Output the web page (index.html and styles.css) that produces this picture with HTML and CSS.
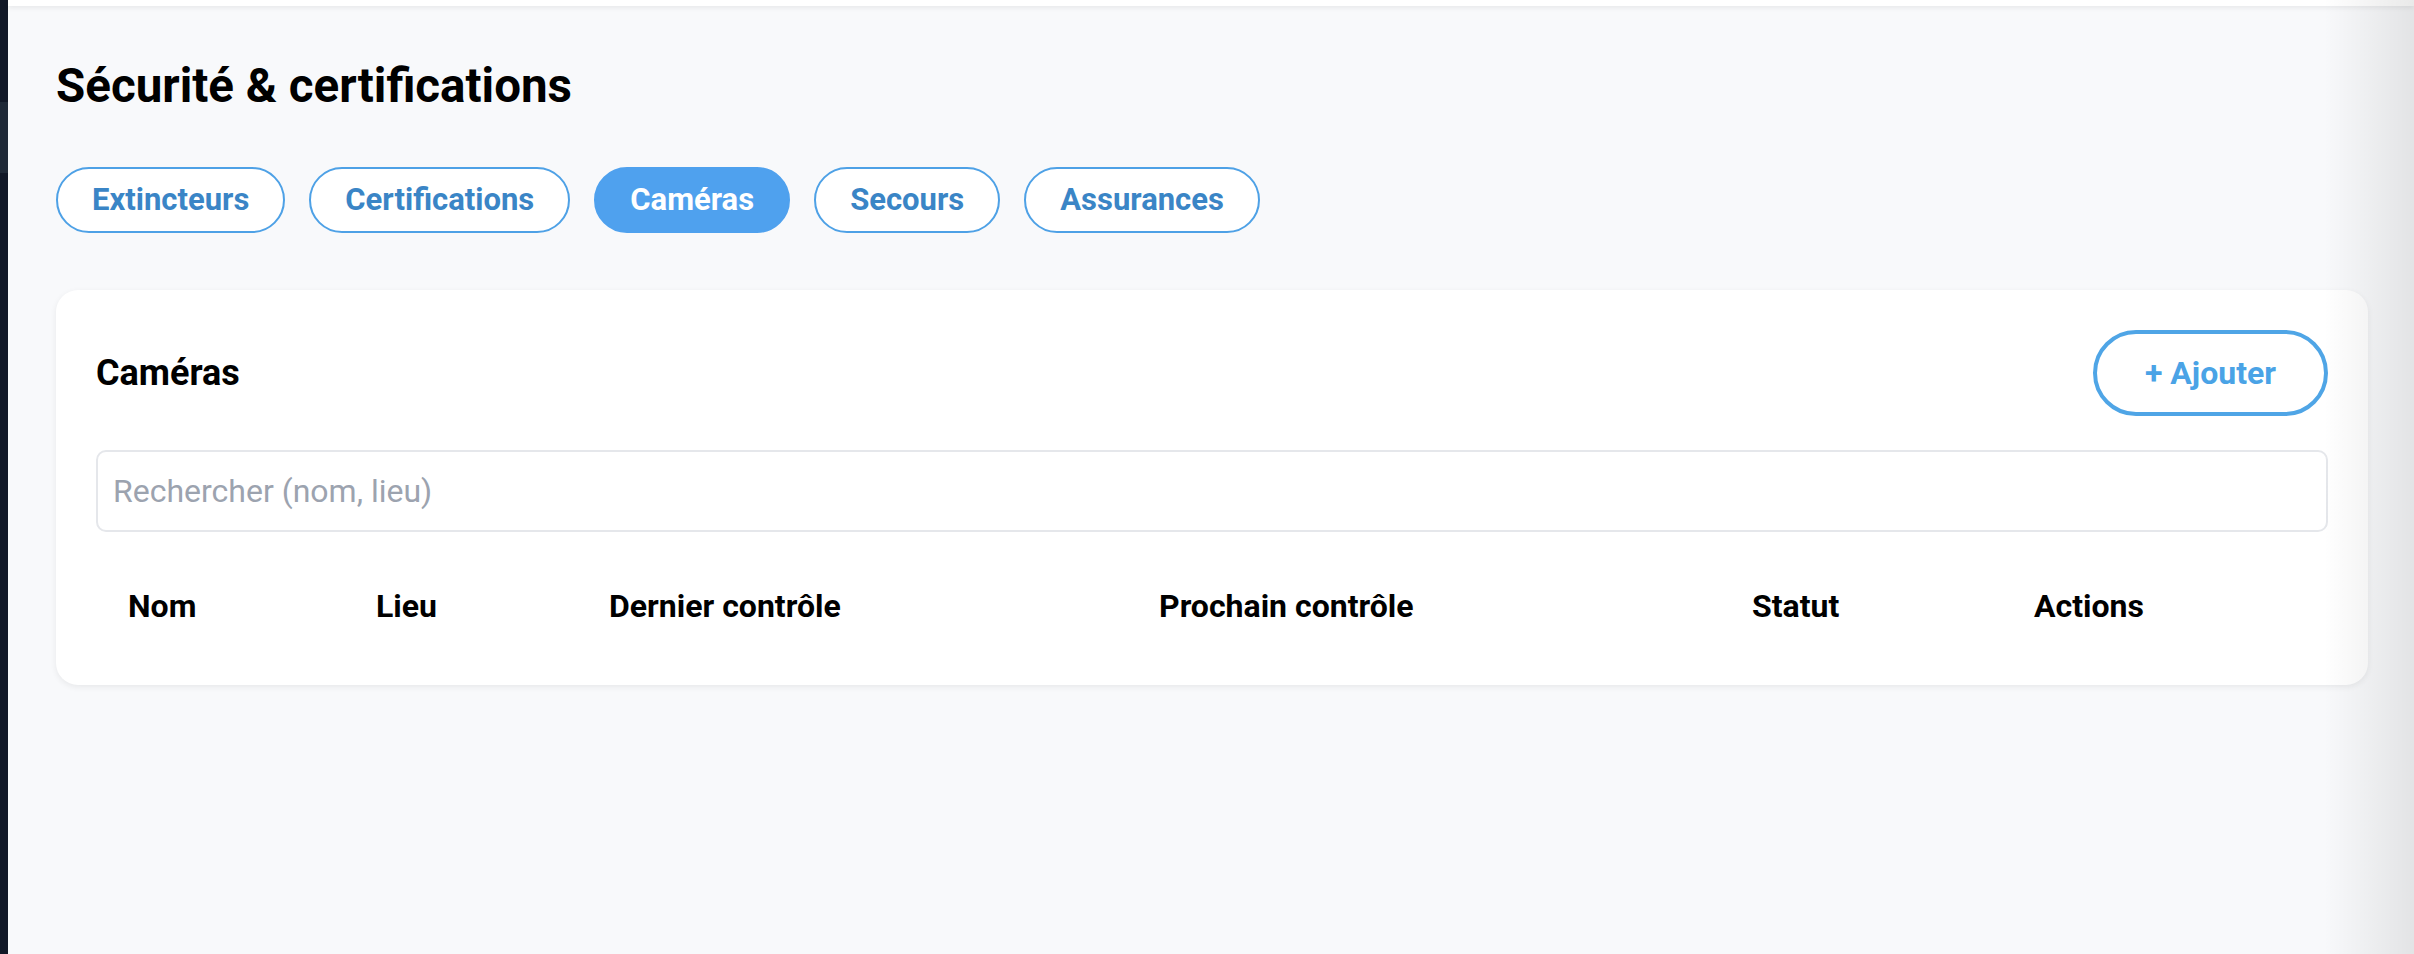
FILE: index.html
```html
<!DOCTYPE html>
<html lang="fr">
<head>
<meta charset="utf-8">
<title>Sécurité &amp; certifications</title>
<link rel="stylesheet" href="styles.css">
</head>
<body>
<div class="app">
  <aside class="sidebar">
    <div class="sidebar-item"></div>
  </aside>
  <div class="main">
    <div class="topbar"></div>
    <main class="content">
      <h1 class="page-title">Sécurité &amp; certifications</h1>
      <nav class="tabs">
        <button class="tab">Extincteurs</button>
        <button class="tab">Certifications</button>
        <button class="tab active">Caméras</button>
        <button class="tab">Secours</button>
        <button class="tab">Assurances</button>
      </nav>
      <section class="card">
        <div class="card-header">
          <h2 class="card-title">Caméras</h2>
          <button class="add-btn">+ Ajouter</button>
        </div>
        <input class="search" type="text" placeholder="Rechercher (nom, lieu)">
        <table class="data-table">
          <colgroup>
            <col class="c-nom"><col class="c-lieu"><col class="c-dernier"><col class="c-prochain"><col class="c-statut"><col class="c-actions">
          </colgroup>
          <thead>
            <tr>
              <th>Nom</th>
              <th>Lieu</th>
              <th>Dernier contrôle</th>
              <th>Prochain contrôle</th>
              <th>Statut</th>
              <th>Actions</th>
            </tr>
          </thead>
          <tbody></tbody>
        </table>
      </section>
    </main>
    <div class="edge-shade"></div>
  </div>
</div>
</body>
</html>
```
FILE: styles.css
```css
* { box-sizing: border-box; }

html, body {
  margin: 0;
  padding: 0;
  height: 100%;
}

body {
  background: #f8f9fb;
  font-family: Roboto, "Liberation Sans", Arial, sans-serif;
  color: #000;
  overflow: hidden;
}

.app {
  display: flex;
  min-height: 100vh;
}

.sidebar {
  width: 8px;
  flex: 0 0 8px;
  background: #111827;
}

.sidebar-item {
  margin-top: 102px;
  height: 71px;
  background: #1f2937;
}

.main {
  flex: 1;
  position: relative;
  min-width: 0;
}

.topbar {
  height: 6px;
  background: #ffffff;
  box-shadow: 0 2px 5px rgba(0, 0, 0, 0.07);
}

.content {
  padding: 52px 46px 0 48px;
}

.page-title {
  margin: 0;
  font-size: 47.5px;
  line-height: 57.6px;
  font-weight: 700;
  color: #000;
}

.tabs {
  display: flex;
  gap: 24px;
  margin-top: 51px;
}

.tab {
  font-family: inherit;
  font-size: 31px;
  line-height: 38px;
  font-weight: 700;
  color: #3a85c6;
  background: #ffffff;
  border: 2px solid #4ea1e6;
  border-radius: 33px;
  padding: 12px 34px;
  cursor: pointer;
}

.tab.active {
  background: #4fa1ee;
  border-color: #4fa1ee;
  color: #ffffff;
}

.card {
  margin-top: 57px;
  background: #ffffff;
  border-radius: 22px;
  padding: 40px 40px 31px;
  box-shadow: 0 2px 6px rgba(0, 0, 0, 0.07);
}

.card-header {
  display: flex;
  justify-content: space-between;
  align-items: center;
}

.card-title {
  margin: 0;
  font-size: 36px;
  line-height: 44px;
  font-weight: 700;
  color: #000;
}

.add-btn {
  font-family: inherit;
  font-size: 32px;
  line-height: 38px;
  font-weight: 700;
  color: #4aa3e6;
  background: #ffffff;
  border: 4px solid #4fa5e6;
  border-radius: 43px;
  padding: 20px 48px;
  cursor: pointer;
}

.search {
  display: block;
  width: 100%;
  height: 82px;
  margin-top: 34px;
  border: 2px solid #e5e7eb;
  border-radius: 10px;
  padding: 0 15px;
  font-family: inherit;
  font-size: 32px;
  color: #111827;
  background: #ffffff;
  outline: none;
}

.search::placeholder {
  color: #9ca3af;
}

.data-table {
  width: 100%;
  margin-top: 26px;
  border-collapse: collapse;
  table-layout: fixed;
}

.c-nom { width: 248px; }
.c-lieu { width: 233px; }
.c-dernier { width: 550px; }
.c-prochain { width: 593px; }
.c-statut { width: 282px; }

.data-table th {
  text-align: left;
  padding: 24px 32px;
  font-size: 32px;
  line-height: 48px;
  font-weight: 700;
  color: #000;
  white-space: nowrap;
}

.edge-shade {
  position: absolute;
  top: 0;
  right: 0;
  bottom: 0;
  width: 90px;
  background: linear-gradient(to right, rgba(0, 0, 0, 0), rgba(0, 0, 0, 0.085));
  pointer-events: none;
}
```
